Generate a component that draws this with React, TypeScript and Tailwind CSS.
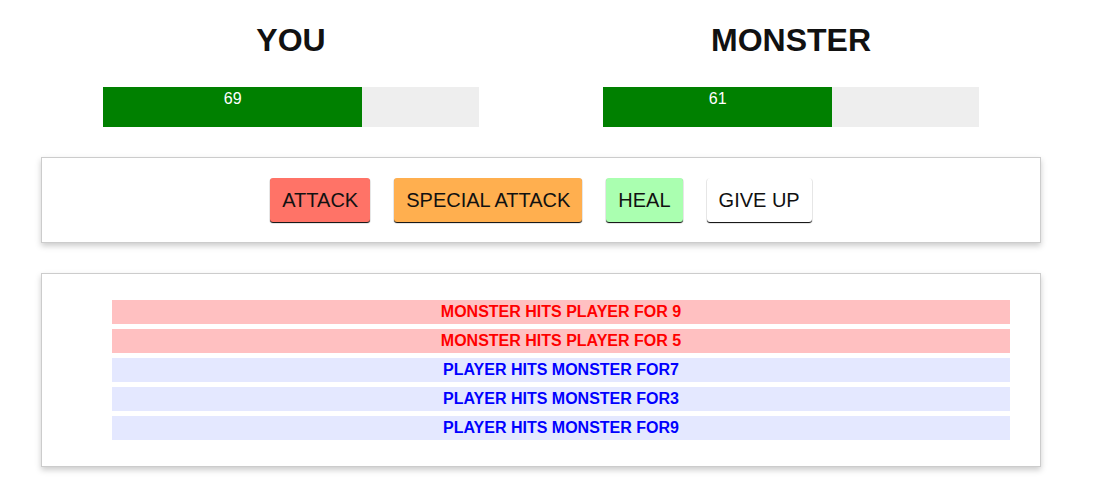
import React from "react";

type LogEntry = { who: "player" | "monster"; text: string };

const log: LogEntry[] = [
  { who: "monster", text: "Monster hits Player for 9" },
  { who: "monster", text: "Monster hits Player for 5" },
  { who: "player", text: "Player hits Monster for7" },
  { who: "player", text: "Player hits Monster for3" },
  { who: "player", text: "Player hits Monster for9" },
];

function Side({ title, health }: { title: string; health: number }) {
  return (
    <div className="w-1/2 px-[15px]">
      <h1 className="text-center text-[32px] font-bold leading-[48px] text-[#111]">{title}</h1>
      <div className="mx-auto mt-[23px] h-[40px] w-4/5 bg-[#eeeeee]">
        <div
          className="h-full bg-[#008000] text-center text-[16px] leading-6 text-white"
          style={{ width: `${health}%` }}
        >
          {health}
        </div>
      </div>
    </div>
  );
}

export default function App() {
  return (
    <div className="min-h-screen bg-white">
      <div className="ml-[41px] w-[1000px] pt-[16px] font-['Liberation_Sans',Arial,sans-serif]">
        <div className="flex">
          <Side title="YOU" health={69} />
          <Side title="MONSTER" health={61} />
        </div>

        <div className="mt-[30px] flex justify-center gap-[24px] border border-[#cccccc] bg-white py-[20px] shadow-[0_3px_6px_#cccccc]">
          <button className="rounded-[3px] bg-[#ff7367] px-[12px] py-[10px] text-[20px] leading-[24px] text-[#111] shadow-[0_1px_1px_black]">
            ATTACK
          </button>
          <button className="rounded-[3px] bg-[#ffaf4f] px-[12px] py-[10px] text-[20px] leading-[24px] text-[#111] shadow-[0_1px_1px_black]">
            SPECIAL ATTACK
          </button>
          <button className="rounded-[3px] bg-[#aaffb0] px-[12px] py-[10px] text-[20px] leading-[24px] text-[#111] shadow-[0_1px_1px_black]">
            HEAL
          </button>
          <button className="rounded-[3px] bg-white px-[12px] py-[10px] text-[20px] leading-[24px] text-[#111] shadow-[0_1px_1px_black]">
            GIVE UP
          </button>
        </div>

        <div className="mt-[30px] border border-[#cccccc] bg-white pb-[26px] pl-[70px] pr-[30px] pt-[26px] shadow-[0_3px_6px_#cccccc]">
          <ul className="flex flex-col gap-[5px]">
            {log.map((e, i) => (
              <li
                key={i}
                className={
                  e.who === "monster"
                    ? "h-6 bg-[#ffc0c1] text-center text-[16px] font-bold uppercase leading-6 text-[#ff0000]"
                    : "h-6 bg-[#e4e8ff] text-center text-[16px] font-bold uppercase leading-6 text-[#0000ff]"
                }
              >
                {e.text}
              </li>
            ))}
          </ul>
        </div>
      </div>
    </div>
  );
}
